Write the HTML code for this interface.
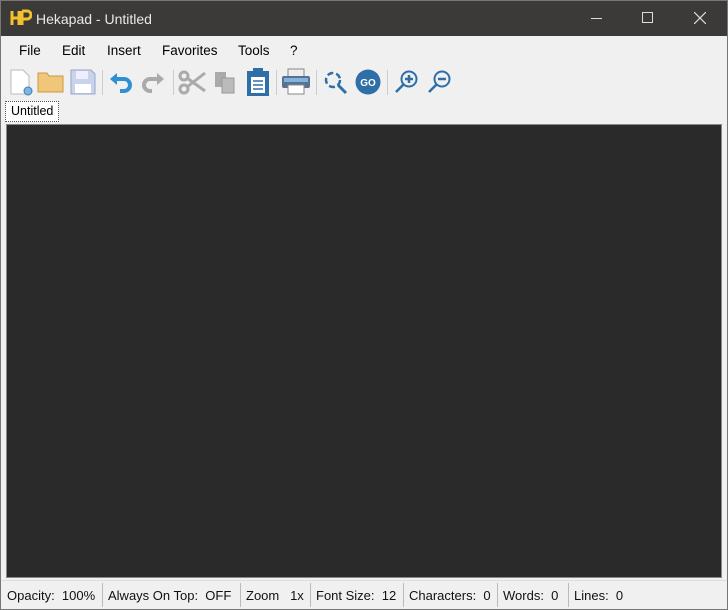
<!DOCTYPE html>
<html><head><meta charset="utf-8"><style>
*{margin:0;padding:0;box-sizing:border-box}
body{width:728px;height:610px;overflow:hidden;background:#f0f0f0;font-family:"Liberation Sans",sans-serif;position:relative}
.tb{position:absolute;left:0;top:0;width:728px;height:36px;background:#3b3a38;color:#e8e8e8;font-size:14px}
.t{position:absolute;left:36px;top:11px}
.menu{position:absolute;top:43px;font-size:13.5px;color:#000}
.menu span{position:absolute;white-space:nowrap}
.ed{position:absolute;left:6px;top:124px;width:716px;height:454px;background:#2a2a2a;border:1px solid #888}
.tab{position:absolute;left:5px;top:101px;width:54px;height:21px;background:#fff;border:1px dotted #555;font-size:12.5px;padding:2px 0 0 5px}
.sb{position:absolute;top:588px;font-size:13px;color:#111;white-space:nowrap}
.sep{position:absolute;top:583px;width:1px;height:24px;background:#bbb}
.tsep{position:absolute;top:70px;width:1px;height:25px;background:#ccc}
svg{position:absolute}
.frame{position:absolute;left:0;top:0;width:728px;height:610px;border:1px solid #777;pointer-events:none}
</style></head><body>
<div class="tb">
<svg style="left:10px;top:9px" width="22" height="18"><path d="M2 2v14M2 9h7M9 2v14M12 2v14M12 2h5a4 4 0 0 1 0 8h-5" stroke="#f2c12e" stroke-width="3" fill="none"/></svg>
<div class="t">Hekapad - Untitled</div>
<div style="position:absolute;left:591px;top:18px;width:11px;height:1px;background:#ddd"></div>
<div style="position:absolute;left:642px;top:12px;width:11px;height:11px;border:1px solid #ddd"></div>
<svg style="left:694px;top:12px" width="12" height="12"><path d="M0 0L12 12M12 0L0 12" stroke="#ddd" stroke-width="1.2"/></svg>
</div>
<div class="menu"><span style="left:19px">File</span><span style="left:62px">Edit</span><span style="left:107px">Insert</span><span style="left:162px">Favorites</span><span style="left:238px">Tools</span><span style="left:290px">?</span></div>
<svg style="left:8px;top:68px" width="28" height="28"><path d="M3 2h12l6 6v18H3z" fill="#fff" stroke="#bbb"/><circle cx="20" cy="23" r="4" fill="#7fb3e0" stroke="#3d7fb8"/></svg>
<svg style="left:37px;top:70px" width="28" height="24"><path d="M1 3h9l2 3h14v16H1z" fill="#f0c77a" stroke="#c89a3f"/></svg>
<svg style="left:70px;top:69px" width="26" height="26"><path d="M1 1h20l4 4v20H1z" fill="#c9d3ea" stroke="#98a6cc"/><rect x="6" y="2" width="12" height="8" fill="#eef"/><rect x="5" y="15" width="16" height="9" fill="#fff"/></svg>
<div class="tsep" style="left:102px"></div>
<svg style="left:109px;top:71px" width="24" height="22"><path d="M5 8h10a6 6 0 0 1 0 12h-4" stroke="#2f8fd0" stroke-width="4" fill="none"/><path d="M1 8l7-6v12z" fill="#2f8fd0"/></svg>
<svg style="left:141px;top:71px" width="24" height="22"><path d="M19 8H9a6 6 0 0 0 0 12h2" stroke="#aaa" stroke-width="4" fill="none"/><path d="M23 8l-7-6v12z" fill="#aaa"/></svg>
<div class="tsep" style="left:173px"></div>
<svg style="left:178px;top:69px" width="28" height="26"><circle cx="6" cy="7" r="4" stroke="#aaa" stroke-width="3" fill="none"/><circle cx="6" cy="20" r="4" stroke="#aaa" stroke-width="3" fill="none"/><path d="M9 9L27 22M9 18L27 4" stroke="#aaa" stroke-width="3"/></svg>
<svg style="left:213px;top:70px" width="24" height="24"><rect x="2" y="2" width="11" height="15" fill="#aaa"/><rect x="9" y="8" width="12" height="15" fill="#bbb" stroke="#999"/></svg>
<svg style="left:245px;top:67px" width="26" height="30"><rect x="2" y="4" width="22" height="25" fill="#2e6fa8"/><rect x="6" y="10" width="14" height="16" fill="#fff"/><rect x="8" y="1" width="10" height="6" fill="#2e6fa8"/><path d="M8 14h10M8 18h10M8 22h10" stroke="#2e6fa8" stroke-width="1.5"/></svg>
<div class="tsep" style="left:276px"></div>
<svg style="left:281px;top:68px" width="30" height="28"><rect x="7" y="1" width="16" height="8" fill="#eee" stroke="#888"/><rect x="1" y="8" width="28" height="12" rx="2" fill="#5b6f90"/><rect x="3" y="10" width="24" height="4" fill="#7fb3e0"/><rect x="7" y="17" width="16" height="9" fill="#fff" stroke="#888"/></svg>
<div class="tsep" style="left:316px"></div>
<svg style="left:322px;top:69px" width="26" height="26"><circle cx="11" cy="11" r="7" stroke="#2e6fa8" stroke-width="2.5" fill="none" stroke-dasharray="6 3"/><path d="M16 16l8 8" stroke="#2e6fa8" stroke-width="3"/></svg>
<svg style="left:355px;top:69px" width="26" height="26"><circle cx="13" cy="13" r="12.5" fill="#2e6fa8"/><text x="13" y="17" font-size="10" font-weight="bold" fill="#fff" text-anchor="middle" font-family="Liberation Sans">GO</text></svg>
<div class="tsep" style="left:387px"></div>
<svg style="left:394px;top:69px" width="26" height="26"><circle cx="15" cy="10" r="7.5" stroke="#2e6fa8" stroke-width="2" fill="none"/><path d="M10 15L2 23M11 10h8M15 6v8" stroke="#2e6fa8" stroke-width="2.5"/></svg>
<svg style="left:427px;top:69px" width="26" height="26"><circle cx="15" cy="10" r="7.5" stroke="#2e6fa8" stroke-width="2" fill="none"/><path d="M10 15L2 23M11 10h8" stroke="#2e6fa8" stroke-width="2.5"/></svg>
<div class="tab">Untitled</div>
<div class="ed"></div>
<div style="position:absolute;left:0;top:580px;width:728px;height:1px;background:#ddd"></div>
<div class="sb" style="left:7px">Opacity:&nbsp; 100%</div><div class="sep" style="left:102px"></div>
<div class="sb" style="left:108px">Always On Top:&nbsp; OFF</div><div class="sep" style="left:240px"></div>
<div class="sb" style="left:246px">Zoom&nbsp;&nbsp; 1x</div><div class="sep" style="left:310px"></div>
<div class="sb" style="left:316px">Font Size:&nbsp; 12</div><div class="sep" style="left:403px"></div>
<div class="sb" style="left:409px">Characters:&nbsp; 0</div><div class="sep" style="left:497px"></div>
<div class="sb" style="left:503px">Words:&nbsp; 0</div><div class="sep" style="left:568px"></div>
<div class="sb" style="left:574px">Lines:&nbsp; 0</div>
<div class="frame"></div>
</body></html>
